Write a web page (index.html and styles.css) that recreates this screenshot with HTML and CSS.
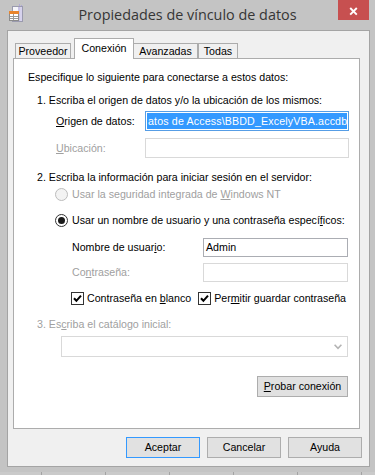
FILE: index.html
```html
<!DOCTYPE html>
<html lang="es">
<head>
<meta charset="utf-8">
<title>Propiedades de vínculo de datos</title>
<link rel="stylesheet" href="styles.css">
</head>
<body>
<div class="window">
  <div class="titlebar">
    <div class="app-icon">
      <svg width="20" height="20" viewBox="0 0 20 20">
        <rect x="6.5" y="2.5" width="10" height="15" fill="#f6f6fa" stroke="#9a9aae"/>
        <line x1="13" y1="3" x2="13" y2="17" stroke="#9b8fd0" stroke-width="1"/>
        <line x1="15" y1="3" x2="15" y2="17" stroke="#b7aee0" stroke-width="1"/>
        <rect x="13" y="0" width="1" height="2" fill="#b0a8d8"/>
        <rect x="15" y="1" width="1" height="1" fill="#b0a8d8"/>
        <rect x="3.5" y="7.5" width="9" height="9" fill="#ffffff" stroke="#8c8c8c"/>
        <rect x="3" y="7" width="10" height="3" fill="#e8842c"/>
        <line x1="4" y1="12.5" x2="12" y2="12.5" stroke="#9a9a9a"/>
        <line x1="4" y1="14.5" x2="12" y2="14.5" stroke="#9a9a9a"/>
        <line x1="7.5" y1="10" x2="7.5" y2="16" stroke="#9a9a9a"/>
      </svg>
    </div>
    <div class="title">Propiedades de vínculo de datos</div>
    <div class="close">
      <svg width="31" height="20" viewBox="0 0 31 20">
        <path d="M12.2 8 L18.8 14.6 M18.8 8 L12.2 14.6" stroke="#ffffff" stroke-width="1.9" fill="none"/>
      </svg>
    </div>
  </div>

  <div class="client">
    <div class="tabs">
      <div class="tab t1">Proveedor</div>
      <div class="tab t2">Conexión</div>
      <div class="tab t3">Avanzadas</div>
      <div class="tab t4">Todas</div>
    </div>

    <div class="panel">
      <div class="intro">Especifique lo siguiente para conectarse a estos datos:</div>

      <div class="step step1">1. Escriba el origen de datos y/o la ubicación de los mismos:</div>
      <div class="row row-origen">
        <div class="lbl lbl-wide"><u>O</u>rigen de datos:</div>
        <div class="input input-wide focused"><div class="sel">atos de Access\BBDD_ExcelyVBA.accdb</div></div>
      </div>
      <div class="row row-ubic">
        <div class="lbl lbl-wide disabled"><u>U</u>bicación:</div>
        <div class="input input-wide off"></div>
      </div>

      <div class="step step2">2. Escriba la información para iniciar sesión en el servidor:</div>
      <div class="radio-row radio1">
        <span class="radio off"></span>
        <span class="disabled">Usar la seguridad integrada de <u>W</u>indows NT</span>
      </div>
      <div class="radio-row radio2">
        <span class="radio checked"></span>
        <span>Usar un nombre de usuario y una contraseña especí<u>f</u>icos:</span>
      </div>
      <div class="row row-user">
        <div class="lbl lbl-narrow">Nombre de usuar<u>i</u>o:</div>
        <div class="input input-narrow">Admin</div>
      </div>
      <div class="row row-pass">
        <div class="lbl lbl-narrow disabled">Co<u>n</u>traseña:</div>
        <div class="input input-narrow off"></div>
      </div>
      <div class="checks">
        <span class="cb"><svg width="11" height="11" viewBox="0 0 11 11"><path d="M2 5.2 L4.4 7.8 L9 2.6" stroke="#000" stroke-width="2" fill="none"/></svg></span>
        <span class="cb-text">Contraseña en <u>b</u>lanco</span>
        <span class="cb cb2"><svg width="11" height="11" viewBox="0 0 11 11"><path d="M2 5.2 L4.4 7.8 L9 2.6" stroke="#000" stroke-width="2" fill="none"/></svg></span>
        <span class="cb-text">Per<u>m</u>itir guardar contraseña</span>
      </div>

      <div class="step step3 disabled">3. Es<u>c</u>riba el catálogo inicial:</div>
      <div class="combo">
        <svg width="8" height="6" viewBox="0 0 8 6"><path d="M0.6 0.8 L4 4.4 L7.4 0.8" stroke="#b4b4b4" stroke-width="1.6" fill="none"/></svg>
      </div>

      <div class="test-row">
        <div class="btn btn-test"><u>P</u>robar conexión</div>
      </div>
    </div>

    <div class="buttons">
      <div class="btn btn-main default">Aceptar</div>
      <div class="btn btn-main">Cancelar</div>
      <div class="btn btn-main">Ayuda</div>
    </div>
  </div>
  <div class="frame-gap"></div>
  <div class="behind"></div>
</div>
</body>
</html>
```

FILE: styles.css
```css
* { box-sizing: border-box; }
html, body { margin: 0; padding: 0; }
body {
  width: 375px;
  height: 475px;
  overflow: hidden;
  background: #c4c4c4;
  font-family: "Liberation Sans", Arial, sans-serif;
  font-size: 10.65px;
  line-height: 13px;
  color: #000;
}
u { text-decoration: underline; text-underline-offset: 1px; }

.window { display: flex; flex-direction: column; height: 475px; }

.titlebar {
  flex: none;
  height: 30px;
  display: grid;
  grid-template-columns: 1fr auto 1fr;
}
.app-icon { padding: 4px 0 0 6px; }
.app-icon svg { display: block; }
.title {
  font-family: "Open Sans", "Liberation Sans", sans-serif;
  font-size: 14.4px;
  line-height: 29px;
  color: #363636;
  white-space: nowrap;
}
.close {
  justify-self: end;
  align-self: start;
  width: 31px;
  height: 20px;
  margin-right: 6px;
  background: #c75050;
}
.close svg { display: block; }

.client {
  flex: none;
  height: 437px;
  margin: 0 5px 0 7px;
  border: 1px solid #a4a4a4;
  background: #f0f0f0;
  padding: 7px 7px 0 5px;
  display: flex;
  flex-direction: column;
}

.tabs {
  display: flex;
  align-items: flex-end;
  height: 20px;
  padding-left: 2px;
}
.tab {
  height: 15px;
  border: 1px solid #acacac;
  border-bottom: none;
  background: #f0f0f0;
  text-align: center;
  line-height: 14px;
  white-space: nowrap;
}
.t1 { width: 56px; }
.t2 {
  width: 60px;
  height: 21px;
  margin-left: 3px;
  margin-bottom: -1px;
  background: #ffffff;
  z-index: 1;
  line-height: 19px;
}
.t3 { width: 65px; margin-left: -1px; }
.t4 { width: 40px; }

.panel {
  flex: none;
  height: 371px;
  margin-right: 2px;
  border: 1px solid #acacac;
  background: #ffffff;
  padding-top: 12px;
  display: flex;
  flex-direction: column;
}

.disabled { color: #a0a0a0; }

.intro { margin-left: 14px; white-space: nowrap; }
.step { margin-left: 23px; white-space: nowrap; }
.step1 { margin-top: 10px; }
.step2 { margin-top: 13px; }
.step3 { margin-top: 13px; }

.row { display: flex; align-items: center; }
.row-origen { margin: 4px 0 0 42px; }
.row-ubic { margin: 7px 0 0 42px; }
.row-user { margin: 11px 0 0 58px; }
.row-pass { margin: 6px 0 0 58px; }
.lbl { white-space: nowrap; flex: none; }
.lbl-wide { width: 89px; }
.lbl-narrow { width: 131px; }

.input {
  flex: none;
  border: 1px solid #abadb3;
  background: #ffffff;
  padding: 0 2px;
  line-height: 17px;
  white-space: nowrap;
  overflow: hidden;
}
.input-wide { width: 204px; height: 20px; }
.input-narrow { width: 145px; height: 19px; }
.input.off { border-color: #d9d9d9; }
.input.focused { border-color: #569de5; padding: 1px 1px 1px 1px; }
.sel {
  height: 16px;
  background: #3399ff;
  color: #ffffff;
  line-height: 16px;
  padding-left: 1px;
  letter-spacing: 0.15px;
  overflow: hidden;
  white-space: nowrap;
}

.radio-row { display: flex; align-items: center; gap: 4px; margin-left: 41px; white-space: nowrap; }
.radio1 { margin-top: 4px; }
.radio2 { margin-top: 13px; }
.radio {
  flex: none;
  width: 13px;
  height: 13px;
  border-radius: 50%;
  border: 1px solid #333333;
  background: #ffffff;
  display: flex;
  align-items: center;
  justify-content: center;
}
.radio.off { border-color: #bcbcbc; background: #f3f3f3; }
.radio.checked::after {
  content: "";
  width: 7px;
  height: 7px;
  border-radius: 50%;
  background: #1a1a1a;
}

.checks { display: flex; align-items: center; margin: 10px 0 0 57px; white-space: nowrap; }
.cb {
  flex: none;
  width: 13px;
  height: 13px;
  border: 1px solid #333333;
  background: #ffffff;
  display: flex;
  align-items: center;
  justify-content: center;
}
.cb svg { display: block; }
.cb-text { margin-left: 3px; }
.cb2 { margin-left: 7px; }

.combo {
  margin: 5px 0 0 47px;
  width: 287px;
  height: 21px;
  border: 1px solid #d9d9d9;
  background: #ffffff;
  display: flex;
  align-items: center;
  justify-content: flex-end;
  padding-right: 5px;
}
.combo svg { display: block; }

.test-row { display: flex; justify-content: flex-end; margin: 19px 11px 0 0; }

.btn {
  height: 21px;
  border: 1px solid #adadad;
  background: #e1e1e1;
  text-align: center;
  line-height: 19px;
  white-space: nowrap;
}
.btn-test { width: 91px; }

.buttons {
  display: flex;
  justify-content: flex-end;
  gap: 7px;
  margin-top: 8px;
}
.btn-main { width: 74px; }
.btn.default { border-color: #3399ff; }

.frame-gap { flex: 1; }
.behind {
  flex: none;
  height: 3px;
  background: repeating-linear-gradient(90deg, #cacaca 0 41px, #a3a3a3 41px 42px, #cacaca 42px 64px);
}
```
